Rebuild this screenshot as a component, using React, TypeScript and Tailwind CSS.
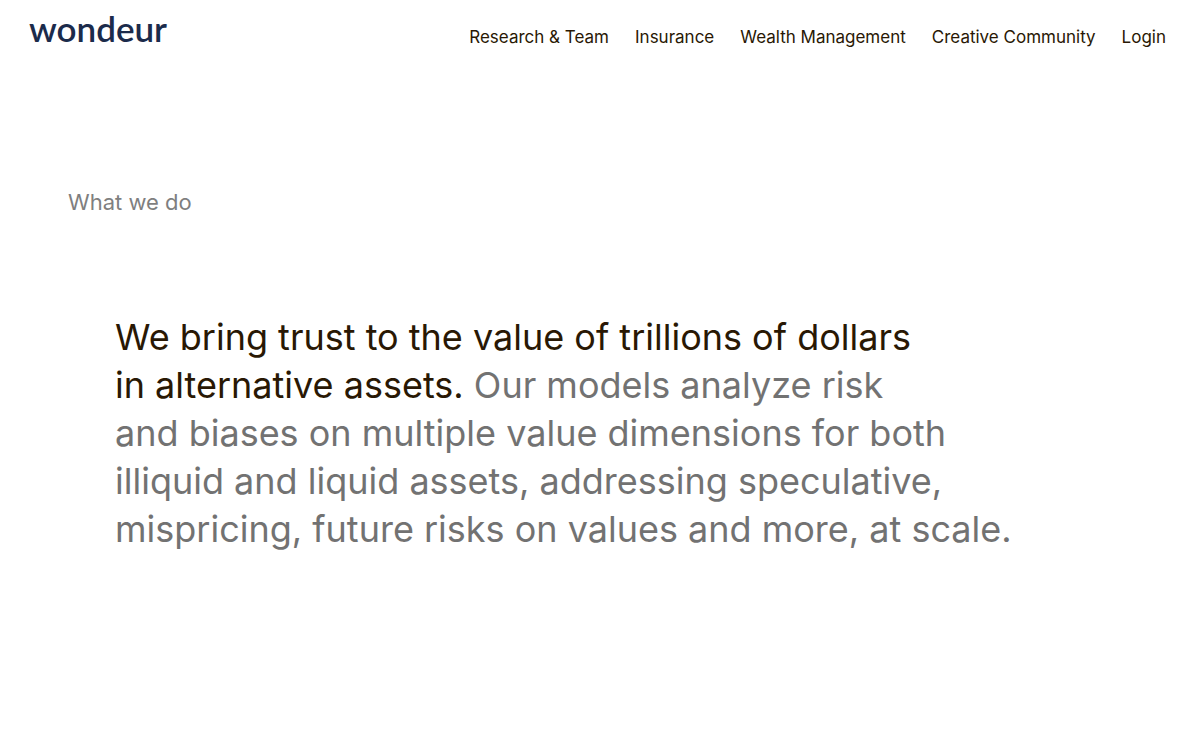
interface NavItem {
  label: string
  href: string
}

const navItems: NavItem[] = [
  { label: 'Research & Team', href: '#research' },
  { label: 'Insurance', href: '#insurance' },
  { label: 'Wealth Management', href: '#wealth' },
  { label: 'Creative Community', href: '#creative' },
  { label: 'Login', href: '#login' },
]

function Header() {
  return (
    <header className="flex items-start justify-between pl-[29px] pr-[34px] pt-[6px]">
      <a
        href="#home"
        className="font-['Lato'] text-[35px] leading-[44px] font-semibold text-[#1b2b4b]"
      >
        wondeur
      </a>
      <nav className="flex gap-[26px] pt-[19px]">
        {navItems.map((item) => (
          <a
            key={item.label}
            href={item.href}
            className="text-[17px] leading-6 whitespace-nowrap text-[#291804]"
          >
            {item.label}
          </a>
        ))}
      </nav>
    </header>
  )
}

export default function App() {
  return (
    <div className="min-h-screen bg-white font-['Inter',sans-serif]">
      <Header />
      <main className="pt-[136px]">
        <h2 className="pl-[68px] text-[22px] leading-8 text-[#7f7f7f]">What we do</h2>
        <p className="pt-[95px] pl-[115px] text-[36px] leading-[48px] text-[#727272]">
          <span className="text-[#291804]">
            We bring trust to the value of trillions of dollars
            <br />
            in alternative assets.
          </span>{' '}
          Our models analyze risk
          <br />
          and biases on multiple value dimensions for both
          <br />
          illiquid and liquid assets, addressing speculative,
          <br />
          mispricing, future risks on values and more, at scale.
        </p>
      </main>
    </div>
  )
}
